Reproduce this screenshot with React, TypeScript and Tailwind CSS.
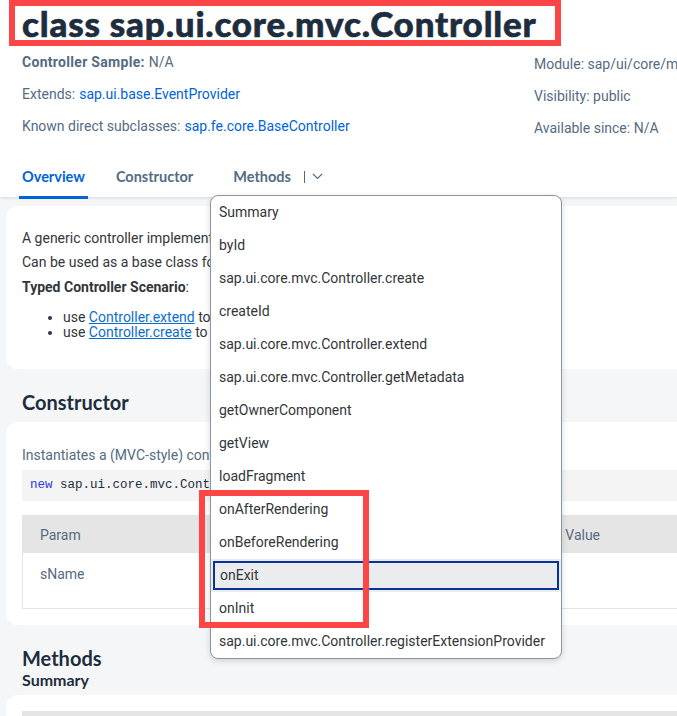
import React from "react";

const items = [
  "Summary",
  "byId",
  "sap.ui.core.mvc.Controller.create",
  "createId",
  "sap.ui.core.mvc.Controller.extend",
  "sap.ui.core.mvc.Controller.getMetadata",
  "getOwnerComponent",
  "getView",
  "loadFragment",
  "onAfterRendering",
  "onBeforeRendering",
  "onExit",
  "onInit",
  "sap.ui.core.mvc.Controller.registerExtensionProvider",
];

export default function App() {
  return (
    <div
      className="relative w-[677px] h-[716px] overflow-hidden bg-[#f5f6f7]"
      style={{ fontFamily: "Roboto, 'Liberation Sans', sans-serif" }}
    >
      {/* Header */}
      <div className="relative z-10 bg-white h-[197px] shadow-[0_1px_3px_rgba(0,0,0,0.12)]">
        <div className="ml-[9px] w-[552px] h-[46px] border-[6px] border-[#fd4545] flex items-center pl-[7px] overflow-hidden">
          <h1
            className="text-[35px] leading-none font-black tracking-[0.8px] text-[#1d2d3e] whitespace-nowrap [-webkit-text-stroke:0.6px_#1d2d3e]"
            style={{ fontFamily: "Lato, sans-serif" }}
          >
            class sap.ui.core.mvc.Controller
          </h1>
        </div>
        <div className="grid grid-cols-[512px_1fr] pl-[22px] text-[14px] text-[#556b82]">
          <div className="flex flex-col">
            <div className="h-[32px] flex items-center">
              <span className="font-bold tracking-[0.3px]">Controller Sample:</span>
              <span className="ml-[4px]">N/A</span>
            </div>
            <div className="h-[32px] flex items-center">
              Extends:<span className="ml-[4px] text-[#0064d9]">sap.ui.base.EventProvider</span>
            </div>
            <div className="h-[32px] flex items-center">
              Known direct subclasses:
              <span className="ml-[4px] text-[#0064d9]">sap.fe.core.BaseController</span>
            </div>
          </div>
          <div className="flex flex-col pt-[2px] whitespace-nowrap">
            <div className="h-[32px] flex items-center">Module: sap/ui/core/mvc/Controller</div>
            <div className="h-[32px] flex items-center">Visibility: public</div>
            <div className="h-[32px] flex items-center">Available since: N/A</div>
          </div>
        </div>
        <div
          className="mt-[15px] flex items-end h-[40px] pl-[19px] text-[14.5px] font-bold text-[#556b82]"
          style={{ fontFamily: "Lato, sans-serif" }}
        >
          <div className="h-[40px] flex items-center pb-[2px] px-[3px] border-b-[3px] border-[#0064d9] text-[#0064d9]">
            Overview
          </div>
          <div className="h-[40px] flex items-center pb-[2px] px-[3px] ml-[25px] border-b-[3px] border-transparent">
            Constructor
          </div>
          <div className="h-[40px] flex items-center pb-[2px] px-[3px] ml-[34px] border-b-[3px] border-transparent">
            Methods
            <span className="ml-[13px] w-px h-[12px] bg-[#556b82]" />
            <svg className="ml-[7px]" width="11" height="7" viewBox="0 0 11 7" fill="none">
              <path d="M1 1l4.5 4.5L10 1" stroke="#556b82" strokeWidth="1.2" />
            </svg>
          </div>
        </div>
      </div>

      {/* Content */}
      <div className="pt-[9px] pl-[6px]">
        <div className="w-[720px] bg-white rounded-[12px] pt-[20px] pb-[29px] pl-[16px] text-[14px] text-[#32363a]">
          <p className="leading-[24px]">
            A generic controller implementation for the UI5 Model-View-Controller concept.
          </p>
          <p className="leading-[24px]">
            Can be used as a base class for typed controllers.
          </p>
          <p className="leading-[24px] mt-[1px]">
            <span className="font-bold">Typed Controller Scenario</span>:
          </p>
          <ul className="mt-[11px] pl-[41px] list-disc leading-[15px]">
            <li>
              use{" "}
              <span className="text-[#0a6ed1] underline">Controller.extend</span> to define
              the controller class
            </li>
            <li>
              use{" "}
              <span className="text-[#0a6ed1] underline">Controller.create</span> to create
              an instance
            </li>
          </ul>
        </div>

        <h2
          className="mt-[21px] ml-[16px] text-[20px] leading-[24px] font-bold text-[#1d2d3e]"
          style={{ fontFamily: "Lato, sans-serif" }}
        >
          Constructor
        </h2>

        <div className="mt-[8px] w-[720px] bg-white rounded-[12px] pt-[23px] pb-[16px] pl-[16px] text-[14px] text-[#32363a]">
          <p className="leading-[20px] text-[#556b82]">
            Instantiates a (MVC-style) controller.
          </p>
          <div
            className="mt-[5px] h-[31px] bg-[#f4f4f4] flex items-center pl-[8px] text-[12.5px] text-[#1d2d3e]"
            style={{ fontFamily: "'Liberation Mono', monospace" }}
          >
            <span className="text-[#3333ee]">new</span>
            <span className="ml-[7.5px]">sap.ui.core.mvc.Controller(sName)</span>
          </div>
          <div className="mt-[14px] border-l border-b border-[#e5e5e5]">
            <div className="h-[38px] bg-[#e5e5e5] flex items-center pt-[2px] text-[#556b82]">
              <div className="w-[200px] pl-[17px]">Param</div>
              <div className="w-[120px] pl-[17px]">Type</div>
              <div className="w-[157px] pl-[17px]">Description</div>
              <div className="pl-[17px]">
                <span className="text-[#e5e5e5]">Default </span>Value
              </div>
            </div>
            <div className="h-[55px] flex items-start pt-[11px] text-[#556b82]">
              <div className="w-[200px] pl-[17px] leading-[20px]">sName</div>
              <div className="w-[120px] pl-[17px] leading-[20px]">string</div>
            </div>
          </div>
        </div>

        <h2
          className="mt-[21px] ml-[16px] text-[20px] leading-[24px] font-bold text-[#1d2d3e]"
          style={{ fontFamily: "Lato, sans-serif" }}
        >
          Methods
        </h2>
        <h3
          className="ml-[16px] text-[16px] leading-[20px] font-bold text-[#1d2d3e]"
          style={{ fontFamily: "Lato, sans-serif" }}
        >
          Summary
        </h3>
        <div className="mt-[5px] w-[720px] h-[60px] bg-white rounded-[12px] pt-[16px] pl-[16px]">
          <div className="h-[40px] bg-[#e5e5e5]" />
        </div>
      </div>

      {/* Dropdown */}
      <div className="absolute z-20 left-[210px] top-[195px] w-[352px] bg-white border border-[#8c959f] rounded-[8px] shadow-[0_2px_6px_rgba(0,0,0,0.15)] overflow-hidden text-[14px] text-[#32363a]">
        {items.map((it) =>
          it === "onExit" ? (
            <div key={it} className="h-[33px] bg-[#eaecee] p-[2px]">
              <div className="h-full border-2 border-[#0a3399] flex items-center pl-[5px]">
                {it}
              </div>
            </div>
          ) : (
            <div key={it} className="h-[33px] flex items-center pl-[8px]">
              {it}
            </div>
          )
        )}
      </div>

      {/* Annotation box */}
      <div className="absolute z-30 left-[199px] top-[490px] w-[170px] h-[138px] border-[6px] border-[#fd4545]" />
    </div>
  );
}
